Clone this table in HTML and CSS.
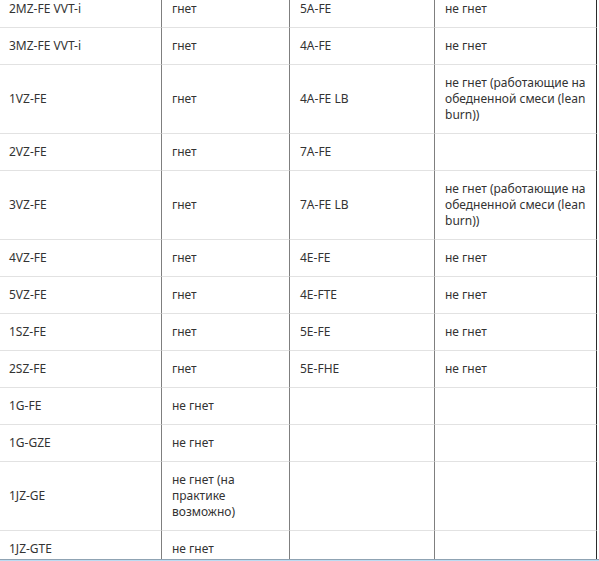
FILE: index.html
```html
<!DOCTYPE html>
<html lang="ru">
<head>
<meta charset="utf-8">
<title>Двигатели</title>
<link rel="stylesheet" href="styles.css">
</head>
<body>
<div class="frame">
  <table class="engines">
    <colgroup>
      <col class="c1"><col class="c2"><col class="c3"><col class="c4">
    </colgroup>
    <tbody>
      <tr><td>2MZ-FE VVT-i</td><td>гнет</td><td>5A-FE</td><td>не гнет</td></tr>
      <tr><td>3MZ-FE VVT-i</td><td>гнет</td><td>4A-FE</td><td>не гнет</td></tr>
      <tr><td>1VZ-FE</td><td>гнет</td><td>4A-FE LB</td><td>не гнет (работающие на обедненной смеси (lean burn))</td></tr>
      <tr><td>2VZ-FE</td><td>гнет</td><td>7A-FE</td><td></td></tr>
      <tr><td>3VZ-FE</td><td>гнет</td><td>7A-FE LB</td><td>не гнет (работающие на обедненной смеси (lean burn))</td></tr>
      <tr><td>4VZ-FE</td><td>гнет</td><td>4E-FE</td><td>не гнет</td></tr>
      <tr><td>5VZ-FE</td><td>гнет</td><td>4E-FTE</td><td>не гнет</td></tr>
      <tr><td>1SZ-FE</td><td>гнет</td><td>5E-FE</td><td>не гнет</td></tr>
      <tr><td>2SZ-FE</td><td>гнет</td><td>5E-FHE</td><td>не гнет</td></tr>
      <tr><td>1G-FE</td><td>не гнет</td><td></td><td></td></tr>
      <tr><td>1G-GZE</td><td>не гнет</td><td></td><td></td></tr>
      <tr><td>1JZ-GE</td><td>не гнет (на практике возможно)</td><td></td><td></td></tr>
      <tr><td>1JZ-GTE</td><td>не гнет</td><td></td><td></td></tr>
    </tbody>
  </table>
</div>
<div class="strip"></div>
</body>
</html>
```
FILE: styles.css
```css
html, body {
  margin: 0;
  padding: 0;
  background: #ffffff;
}

.frame {
  height: 560px;
  overflow: hidden;
  border-bottom: 1px solid #8fa3b3;
  box-sizing: border-box;
}

.strip {
  height: 1px;
  background: #bcdcf2;
}

.engines {
  margin-top: -9px;
  width: 597px;
  table-layout: fixed;
  border-collapse: separate;
  border-spacing: 0;
  font-family: "Noto Sans", "DejaVu Sans", sans-serif;
  font-size: 12px;
  line-height: 16px;
  color: #333333;
}

.c1 { width: 162px; }
.c2 { width: 128px; }
.c3 { width: 145px; }
.c4 { width: 162px; }

.engines td {
  box-sizing: border-box;
  padding: 10px;
  vertical-align: middle;
  border-bottom: 1px solid #e2e2e2;
  border-right: 1px solid #7f7f7f;
}

.engines td:first-child {
  padding-left: 9px;
}

.engines td:last-child {
  border-right-color: #2b2b2b;
}
```
